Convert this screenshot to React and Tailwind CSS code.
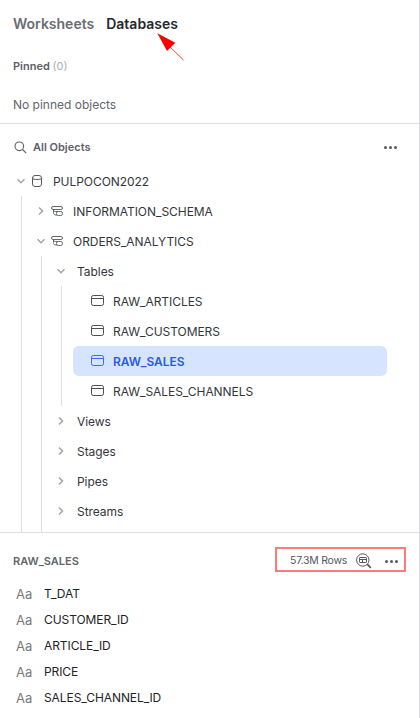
import React from "react";

function Chevron({ open }) {
  return (
    <svg className="h-3 w-3 shrink-0" viewBox="0 0 12 12" fill="none" stroke="#a3a5a8" strokeWidth="1.5">
      <path d={open ? "M2.500 4.300 6 7.800 9.500 4.300" : "M4 2.500 7.500 6 4 9.500"} />
    </svg>
  );
}

function DatabaseIcon() {
  return (
    <svg className="ml-1 h-3 w-3 shrink-0" viewBox="0 0 12 12" fill="none" stroke="#55585d" strokeWidth="1">
      <rect x="1.500" y=".5" width="9" height="11" rx="2.500" />
      <path d="M1.500 3c0 1.200 2 1.500 4.500 1.500s4.500-.3 4.500-1.500" />
    </svg>
  );
}

function SchemaIcon() {
  return (
    <svg className="ml-1 h-3 w-3 shrink-0" viewBox="0 0 12 12" fill="none" stroke="#65686d" strokeWidth="1">
      <rect x=".5" y="1.500" width="11" height="3" rx="1.500" />
      <path d="M2.500 4.500c0 1.300.7 2 2 2H7M2.500 4.500V7.500c0 1.700.9 2.500 2.500 2.500h1" />
      <rect x="5.500" y="6.500" width="6" height="4" rx="1.800" />
    </svg>
  );
}

function TableIcon() {
  return (
    <svg className="h-3 w-[13px] shrink-0" viewBox="0 0 13 12" fill="none" stroke="currentColor" strokeWidth="1" opacity=".88">
      <rect x=".5" y=".5" width="12" height="10" rx="1.800" />
      <path d="M.5 3.500h12" />
    </svg>
  );
}

function Dots() {
  return (
    <svg className="h-[5px] w-[14px] shrink-0" viewBox="0 0 14 5" fill="#56595e">
      <circle cx="2.500" cy="2.500" r="1.500" />
      <circle cx="7.500" cy="2.500" r="1.500" />
      <circle cx="12.500" cy="2.500" r="1.500" />
    </svg>
  );
}

function PreviewIcon() {
  return (
    <svg className="h-4 w-4 shrink-0" viewBox="0 0 16 16" fill="none" stroke="#55585d" strokeWidth="1">
      <circle cx="6.800" cy="7" r="6.200" />
      <rect x="3.500" y="4.500" width="7" height="5" rx=".6" />
      <path d="M3.500 6.500h7M6.500 6.500v3" />
      <path d="m11.300 11.300 3.500 3.500" strokeWidth="1.800" />
    </svg>
  );
}

const tables = ["RAW_ARTICLES", "RAW_CUSTOMERS", "RAW_SALES", "RAW_SALES_CHANNELS"];
const folders = ["Views", "Stages", "Pipes", "Streams"];
const columns = ["T_DAT", "CUSTOMER_ID", "ARTICLE_ID", "PRICE", "SALES_CHANNEL_ID"];

export default function App() {
  return (
    <div className="flex h-[718px] w-[420px] flex-col overflow-hidden border-r border-[#dcdddf] bg-white font-['Inter',sans-serif] text-[12px] text-[#33363b]">
      <header className="relative h-[124px] shrink-0 border-b border-[#dedfe1] pl-[13px]">
        <nav className="flex gap-3 pt-[13px] text-[14px] leading-[22px] font-semibold">
          <span className="text-[#6a6d72]">Worksheets</span>
          <span className="text-[#26292e]">Databases</span>
        </nav>
        <div className="mt-[23px] text-[11px] leading-4 font-semibold text-[#5d6066]">
          Pinned <span className="font-normal text-[#a9acb1]">(0)</span>
        </div>
        <div className="mt-[21px] text-[12px] leading-5 text-[#62656a]">No pinned objects</div>
        <svg className="absolute top-[32px] left-[156px] h-[30px] w-[30px]" viewBox="0 0 30 30">
          <path d="M12 13 27.500 28" stroke="#ff3b3b" strokeWidth="1" />
          <path d="M1.300 1.300 19.300 10.800 11 19Z" fill="#ff0000" />
        </svg>
      </header>

      <section className="h-[409px] shrink-0 overflow-hidden border-b border-[#dedfe1] tracking-[-0.05px]">
        <div className="flex h-[42px] items-center pt-1 pr-[22px] pl-[14px]">
          <svg className="h-[13px] w-[13px]" viewBox="0 0 13 13" fill="none" stroke="#5d6066" strokeWidth="1.100">
            <circle cx="5.300" cy="5.300" r="4.300" />
            <path d="m8.500 8.500 3.700 3.700" />
          </svg>
          <span className="ml-[6px] text-[11px] font-semibold tracking-normal text-[#5d6066]">All Objects</span>
          <span className="ml-auto"><Dots /></span>
        </div>
        <div className="flex h-[30px] items-center pl-[15px]">
          <Chevron open />
          <DatabaseIcon />
          <span className="ml-[10px] pt-[2px]">PULPOCON2022</span>
        </div>
        <div className="ml-[21px] border-l border-[#dedfe1]">
          <div className="flex h-[30px] items-center pl-[13px]">
            <Chevron />
            <SchemaIcon />
            <span className="ml-[10px] pt-[2px]">INFORMATION_SCHEMA</span>
          </div>
          <div className="flex h-[30px] items-center pl-[13px]">
            <Chevron open />
            <SchemaIcon />
            <span className="ml-[10px] pt-[2px]">ORDERS_ANALYTICS</span>
          </div>
          <div className="ml-[19px] h-[300px] border-l border-[#dedfe1]">
            <div className="flex h-[30px] items-center pl-[13px]">
              <Chevron open />
              <span className="ml-[10px] pt-[2px]">Tables</span>
            </div>
            <div className="ml-[19px] border-l border-[#dedfe1] pl-[11px]">
              {tables.map((name) => (
                <div
                  key={name}
                  className={
                    name === "RAW_SALES"
                      ? "flex h-[30px] w-[314px] items-center gap-[9px] rounded-md bg-[#d6e4ff] pl-[18px] font-semibold text-[#2b5bdc]"
                      : "flex h-[30px] w-[314px] items-center gap-[9px] pl-[18px]"
                  }
                >
                  <TableIcon />
                  <span className="pt-[2px]">{name}</span>
                </div>
              ))}
            </div>
            {folders.map((name) => (
              <div key={name} className="flex h-[30px] items-center pl-[13px]">
                <Chevron />
                <span className="ml-[10px] pt-[2px]">{name}</span>
              </div>
            ))}
          </div>
        </div>
      </section>

      <section className="pt-[14px]">
        <div className="flex h-[26px] items-start pr-[13px] pl-[13px]">
          <span className="pt-[6px] text-[11px] leading-4 font-semibold text-[#62656a]">RAW_SALES</span>
          <div className="ml-auto flex h-[25px] w-[131px] items-center border-2 border-[#ff7b7b] pt-[3px] pl-[13px] text-[11px] text-[#55585d]">
            <span className="w-[58px] text-[10.500px] tracking-[-0.25px] whitespace-nowrap">57.3M Rows</span>
            <span className="ml-[8px]"><PreviewIcon /></span>
            <span className="ml-[12px]"><Dots /></span>
          </div>
        </div>
        <div className="mt-[8px]">
          {columns.map((name) => (
            <div key={name} className="flex h-[26px] items-center pl-4 text-[12px] tracking-[-0.08px] text-[#1f2227]">
              <span className="w-7 pt-[2px] text-[13px] text-[#77797d]">Aa</span>
              <span>{name}</span>
            </div>
          ))}
        </div>
      </section>
    </div>
  );
}
